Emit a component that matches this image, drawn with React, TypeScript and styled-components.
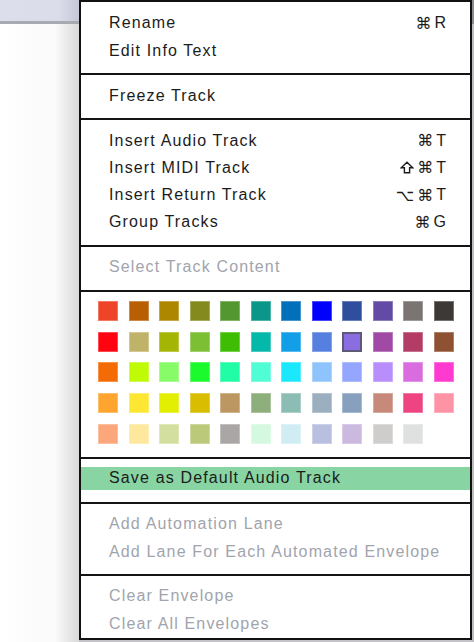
import React from 'react';
import styled, { createGlobalStyle } from 'styled-components';

const GlobalStyle = createGlobalStyle`
  html, body {
    margin: 0;
    padding: 0;
    background: #c4c4c8;
    overflow: hidden;
  }
`;

const Page = styled.div`
  display: flex;
  width: 474px;
  height: 642px;
  font-family: "Liberation Sans", Arial, sans-serif;
`;

const Backdrop = styled.div`
  width: 79px;
  display: flex;
  flex-direction: column;
`;

const TitleBar = styled.div`
  height: 21px;
  background: linear-gradient(to right, #dcdeeb 0%, #dadcea 75%, #c6c7d6 100%);
`;

const TitleRule = styled.div`
  height: 3px;
  background: #a9a9b1;
`;

const BackdropBody = styled.div`
  flex: 1;
  background: linear-gradient(to right, #ffffff 0%, #fafafa 70%, #d9d9db 100%);
`;

const Menu = styled.div`
  width: 393px;
  height: 640px;
  box-sizing: border-box;
  border: 2px solid #111;
  background: #fff;
  display: flex;
  flex-direction: column;
  overflow: hidden;
`;

const Section = styled.div<{ $last?: boolean; $first?: boolean }>`
  padding: ${p => (p.$first ? '7.7px' : '7px')} 0 ${p => (p.$last ? '0' : '8.7px')};
  border-bottom: ${p => (p.$last ? 'none' : '2px solid #141414')};
  flex-shrink: 0;
`;

const HighlightSection = styled.div`
  padding: 8px 0 12px;
  border-bottom: 2px solid #141414;
`;

const Item = styled.div<{ $disabled?: boolean; $active?: boolean }>`
  height: ${p => (p.$active ? '23px' : '27.3px')};
  display: flex;
  align-items: center;
  justify-content: space-between;
  padding: 0 24px 0 28px;
  font-size: 16px;
  letter-spacing: 1.15px;
  color: ${p => (p.$disabled ? '#a1a4ad' : '#1c1c1c')};
  background: ${p => (p.$active ? '#88d4a3' : 'transparent')};
  white-space: nowrap;
`;

const Shortcut = styled.span`
  display: flex;
  align-items: center;
  gap: 3px;
  font-family: "Liberation Sans", "DejaVu Sans", sans-serif;
  font-size: 16px;
  letter-spacing: 0;
  color: #1c1c1c;
`;

const Symbol = styled.span`
  font-family: "DejaVu Sans", sans-serif;
  font-size: 16px;
`;

const ShiftIcon = () => (
  <svg width="14" height="13" viewBox="0 0 14 13" aria-hidden="true">
    <path
      d="M7 1.2 L12.8 6.8 H9.6 V11.8 H4.4 V6.8 H1.2 Z"
      fill="none"
      stroke="#1c1c1c"
      strokeWidth="1.4"
      strokeLinejoin="miter"
    />
  </svg>
);

const SwatchSection = styled.div`
  padding: 9px 16px 13px 17px;
  border-bottom: 2px solid #141414;
  display: grid;
  grid-template-columns: repeat(12, 20px);
  column-gap: 10.5px;
  row-gap: 10.7px;
`;

const Swatch = styled.div<{ $color: string; $selected?: boolean }>`
  width: 20px;
  height: 20px;
  box-sizing: border-box;
  background: ${p => p.$color};
  box-shadow: ${p =>
    p.$selected
      ? 'inset 0 0 0 2px #5d5a78'
      : 'inset 0 0 0 1px rgba(255, 255, 255, 0.28)'};
`;

const RightEdge = styled.div`
  width: 2px;
  display: flex;
  flex-direction: column;
`;

const RightEdgeTop = styled.div`
  height: 24px;
  background: #8c8c90;
`;

const RightEdgeBody = styled.div`
  flex: 1;
  background: #bdbdc0;
`;

const swatches = [
  '#ee4428', '#b85f04', '#ae8700', '#848a1e', '#52972f', '#0a9688',
  '#0070bb', '#0000fd', '#2f4f9e', '#634aa4', '#7a7473', '#3d3937',
  '#ff0410', '#bfb36a', '#a5b503', '#7cbe34', '#3fbd04', '#04b8aa',
  '#129fe8', '#5580e0', '#8a6de0', '#a04aa6', '#b33c66', '#8e5233',
  '#f46b05', '#c0fa04', '#88fb69', '#1bfa2c', '#21fca6', '#50fdd4',
  '#1be8fc', '#8ec4fb', '#94a6fd', '#b88efc', '#d96ddf', '#ff3ad0',
  '#fda52e', '#fde733', '#e2ee02', '#d9bd00', '#bd9762', '#8daf7c',
  '#8cbdb5', '#9cafc0', '#86a0bd', '#c6897a', '#ee4481', '#fe93a5',
  '#fca77b', '#fde89e', '#d2df9e', '#bbc97a', '#a9a6a5', '#d4f9e0',
  '#cfedf3', '#b9c0df', '#ccb9e0', '#cfcccc', '#dfe1e1',
];

const SELECTED = 20;

type Mod = 'shift' | 'option';

const Keys = ({ mod, keyName }: { mod?: Mod; keyName: string }) => (
  <Shortcut>
    {mod === 'shift' && <ShiftIcon />}
    {mod === 'option' && <Symbol>⌥</Symbol>}
    <Symbol>⌘</Symbol>
    {keyName}
  </Shortcut>
);

const App = (): React.ReactElement => (
  <>
    <GlobalStyle />
    <Page>
      <Backdrop>
        <TitleBar />
        <TitleRule />
        <BackdropBody />
      </Backdrop>
      <Menu>
        <Section $first>
          <Item>Rename<Keys keyName="R" /></Item>
          <Item>Edit Info Text</Item>
        </Section>
        <Section>
          <Item>Freeze Track</Item>
        </Section>
        <Section>
          <Item>Insert Audio Track<Keys keyName="T" /></Item>
          <Item>Insert MIDI Track<Keys mod="shift" keyName="T" /></Item>
          <Item>Insert Return Track<Keys mod="option" keyName="T" /></Item>
          <Item>Group Tracks<Keys keyName="G" /></Item>
        </Section>
        <Section>
          <Item $disabled>Select Track Content</Item>
        </Section>
        <SwatchSection>
          {swatches.map((c, i) => (
            <Swatch key={c + i} $color={c} $selected={i === SELECTED} />
          ))}
        </SwatchSection>
        <HighlightSection>
          <Item $active>Save as Default Audio Track</Item>
        </HighlightSection>
        <Section>
          <Item $disabled>Add Automation Lane</Item>
          <Item $disabled>Add Lane For Each Automated Envelope</Item>
        </Section>
        <Section $last>
          <Item $disabled>Clear Envelope</Item>
          <Item $disabled>Clear All Envelopes</Item>
        </Section>
      </Menu>
      <RightEdge>
        <RightEdgeTop />
        <RightEdgeBody />
      </RightEdge>
    </Page>
  </>
);

export default App;
